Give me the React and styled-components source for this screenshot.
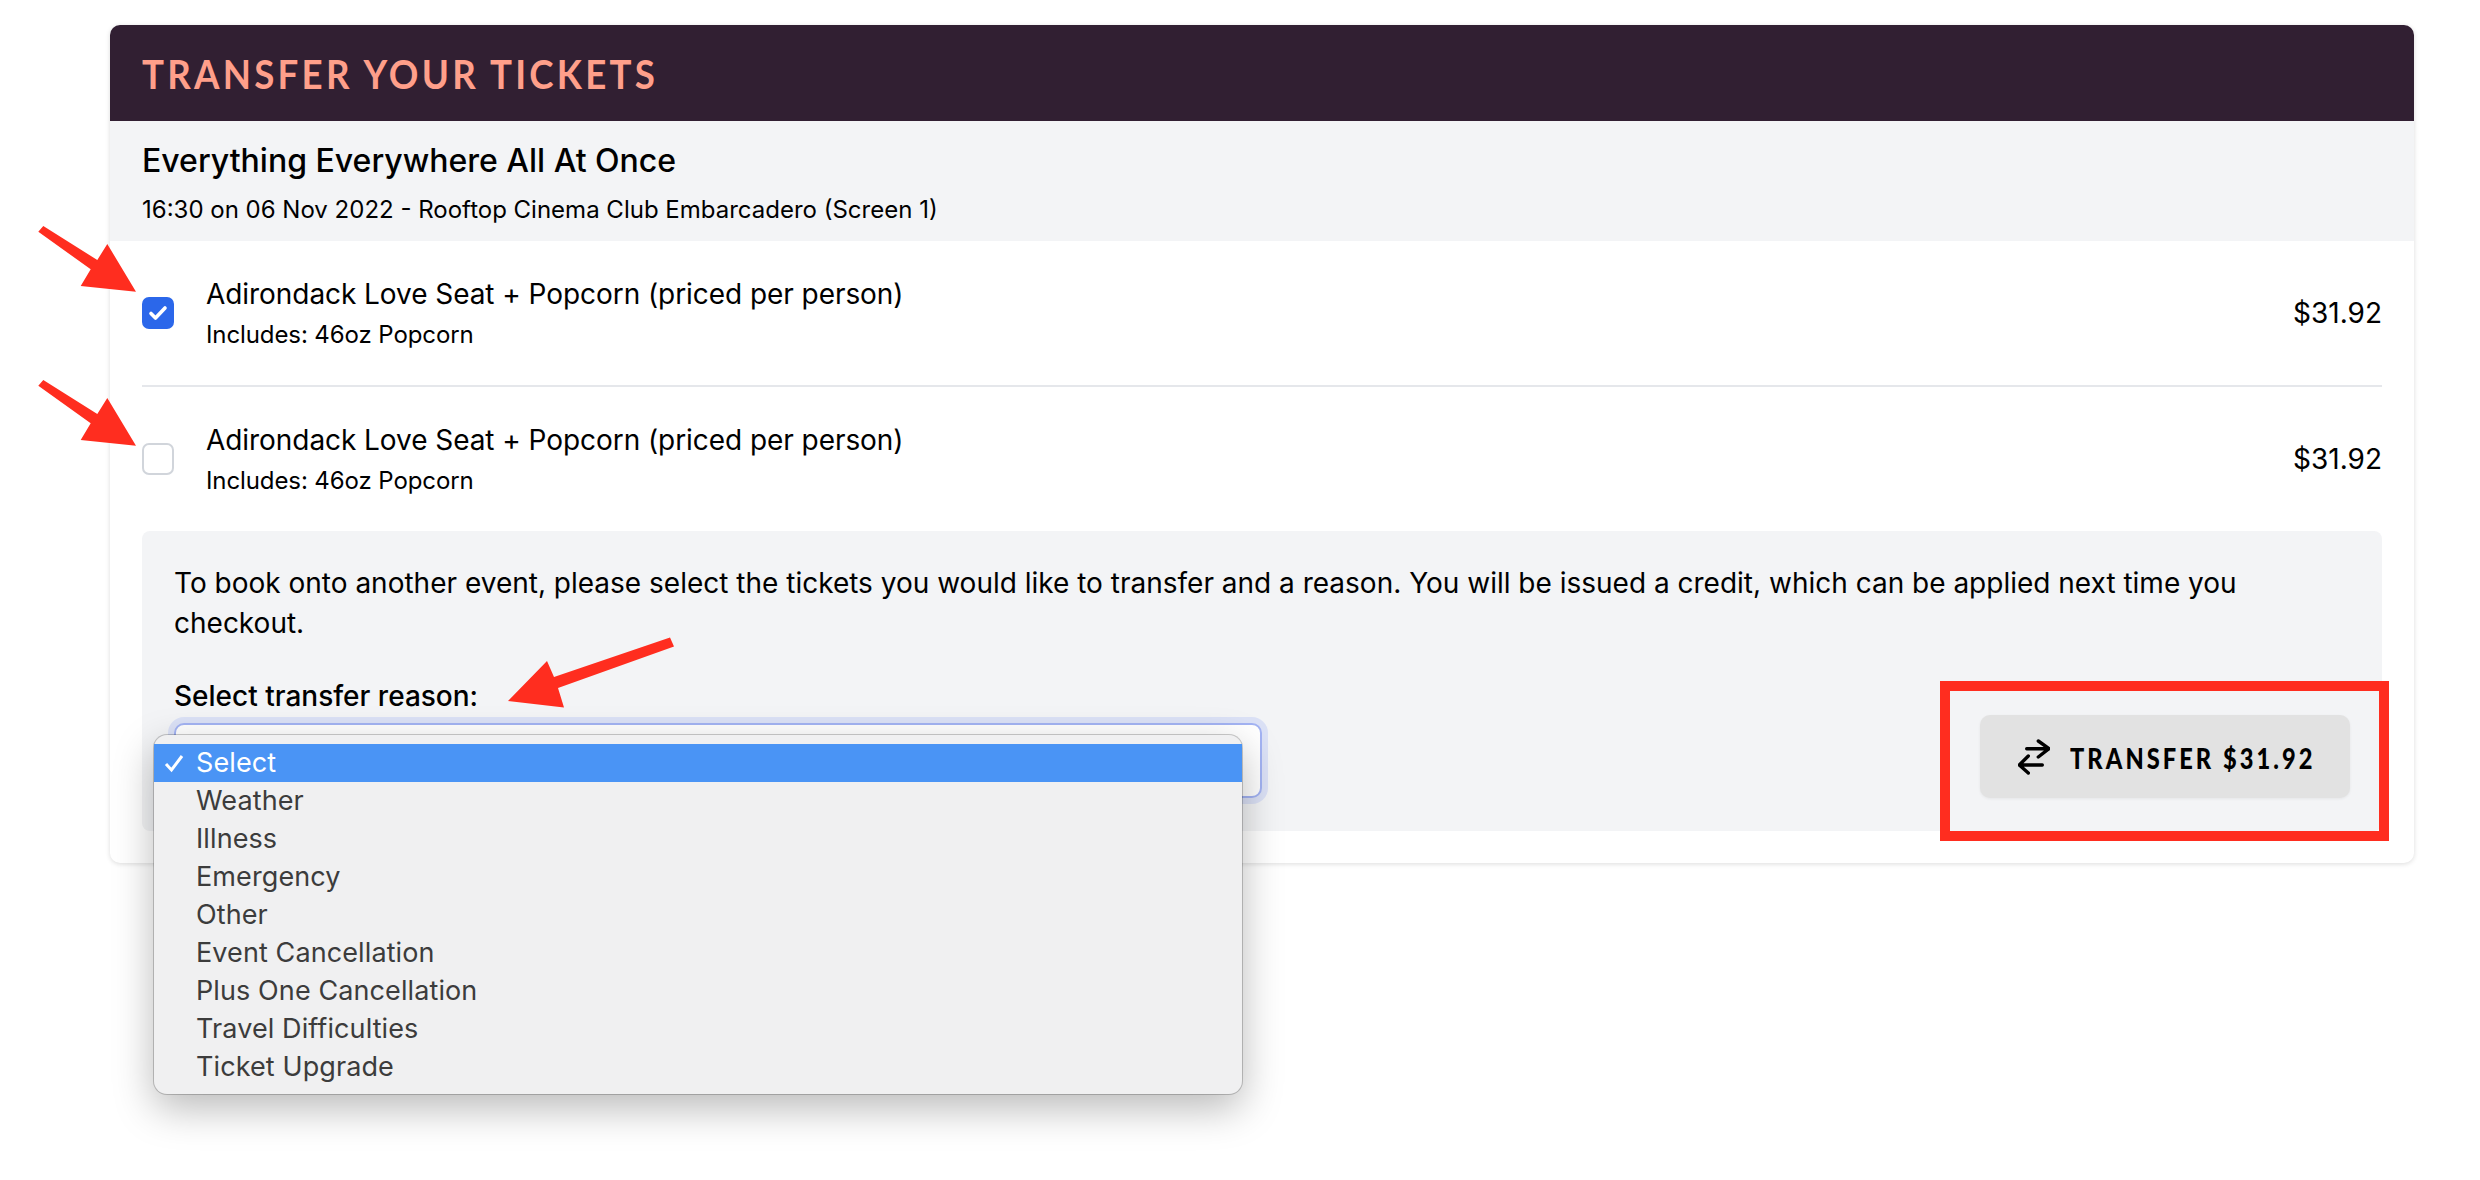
import React from 'react';
import styled, { createGlobalStyle } from 'styled-components';

const GlobalStyle = createGlobalStyle`
  html, body {
    margin: 0;
    background: #fff;
  }
  body {
    font-family: Inter, "Liberation Sans", sans-serif;
    color: #000;
  }
`;

const Page = styled.div`
  position: relative;
  width: 2480px;
  height: 1180px;
  padding: 25px 66px 0 110px;
  box-sizing: border-box;
  overflow: hidden;
`;

const Card = styled.section`
  padding-bottom: 32px;
  background: #fff;
  border-radius: 10px;
  box-shadow: 0 1px 5px rgba(0, 0, 0, 0.14);
`;

const Header = styled.header`
  height: 96px;
  display: flex;
  align-items: center;
  padding: 0 32px;
  background: #311f32;
  border-radius: 10px 10px 0 0;
`;

const HeaderTitle = styled.h1`
  margin: 0;
  font-family: Lato, sans-serif;
  font-size: 41px;
  font-weight: 700;
  letter-spacing: 3.6px;
  color: #ff9f8a;
  white-space: nowrap;
  transform: scaleX(0.895);
  transform-origin: left center;
`;

const EventInfo = styled.div`
  height: 120px;
  box-sizing: border-box;
  padding: 18px 32px 0;
  background: #f3f4f6;
`;

const EventName = styled.h2`
  margin: 0 0 9px;
  font-size: 32px;
  line-height: 44px;
  font-weight: 500;
`;

const EventMeta = styled.div`
  font-size: 24px;
  line-height: 36px;
`;

const TicketList = styled.div`
  padding: 0 32px;
`;

const TicketRow = styled.div`
  height: 144px;
  display: flex;
  align-items: center;
  border-bottom: ${p => (p.$divider ? '2px solid #e5e7eb' : 'none')};
`;

const Checkbox = styled.span`
  width: 32px;
  height: 32px;
  box-sizing: border-box;
  flex: none;
  display: flex;
  align-items: center;
  justify-content: center;
  margin-right: 32px;
  border-radius: 7px;
  background: ${p => (p.$checked ? '#2b67ea' : '#fff')};
  border: ${p => (p.$checked ? 'none' : '2px solid #d1d5db')};
`;

const TicketText = styled.div`
  flex: 1;
`;

const TicketName = styled.div`
  font-size: 28px;
  line-height: 40px;
  letter-spacing: -0.06px;
  margin-bottom: 3px;
`;

const TicketIncludes = styled.div`
  font-size: 24px;
  line-height: 36px;
  letter-spacing: -0.1px;
`;

const Price = styled.div`
  font-size: 28px;
  line-height: 40px;
`;

const TransferPanel = styled.div`
  margin: 0 32px;
  height: 300px;
  box-sizing: border-box;
  padding: 32px 32px 33px;
  background: #f3f4f6;
  border-radius: 8px;
  display: flex;
  flex-direction: column;
  justify-content: space-between;
`;

const PanelText = styled.p`
  margin: 0;
  font-size: 28px;
  line-height: 40px;
`;

const PanelFooter = styled.div`
  display: flex;
  justify-content: space-between;
  align-items: flex-end;
`;

const ReasonField = styled.div`
  width: 1088px;
`;

const ReasonLabel = styled.label`
  display: block;
  margin-bottom: 7px;
  font-size: 28px;
  line-height: 40px;
  font-weight: 500;
`;

const SelectBox = styled.div`
  position: relative;
  height: 75px;
  box-sizing: border-box;
  background: #fff;
  border: 2px solid #a3b3f3;
  border-radius: 10px;
  box-shadow: 0 0 0 6px #dbe1f6;
`;

const Dropdown = styled.ul`
  position: absolute;
  left: -22px;
  top: 10px;
  width: 1088px;
  margin: 0;
  padding: 9px 0 8px;
  box-sizing: border-box;
  list-style: none;
  background: #f0f0f1;
  border-radius: 13px;
  box-shadow: 0 0 0 1px rgba(0, 0, 0, 0.2), 0 14px 40px rgba(0, 0, 0, 0.28);
  font-family: Inter, "Liberation Sans", sans-serif;
  font-size: 27px;
  letter-spacing: 0.1px;
  color: #3c3c3c;
`;

const DropdownItem = styled.li`
  height: 38px;
  line-height: 38px;
  display: flex;
  align-items: center;
  padding-left: 10px;
  background: ${p => (p.$active ? '#4a94f5' : 'transparent')};
  color: ${p => (p.$active ? '#fff' : 'inherit')};
`;

const ItemCheck = styled.span`
  width: 32px;
  flex: none;
  display: flex;
  align-items: center;
`;

const TransferButton = styled.button`
  width: 370px;
  height: 83px;
  display: flex;
  align-items: center;
  padding: 0 0 0 38px;
  border: none;
  border-radius: 10px;
  background: #e2e2e2;
  box-shadow: 0 1px 3px rgba(0, 0, 0, 0.06);
  color: #000;
`;

const TransferIcon = styled.svg`
  flex: none;
`;

const ButtonLabel = styled.span`
  margin-left: 20px;
  padding-top: 2px;
  font-family: Lato, sans-serif;
  font-size: 28px;
  font-weight: 900;
  letter-spacing: 3.6px;
  white-space: nowrap;
  transform: scaleX(0.845);
  transform-origin: left center;
`;

const ArrowMark = styled.svg`
  position: absolute;
  left: ${p => p.$left}px;
  top: ${p => p.$top}px;
`;

const RedFrame = styled.div`
  position: absolute;
  left: 1940px;
  top: 681px;
  width: 449px;
  height: 160px;
  box-sizing: border-box;
  border: 10px solid #ff2d1f;
`;

const reasons = [
  'Select',
  'Weather',
  'Illness',
  'Emergency',
  'Other',
  'Event Cancellation',
  'Plus One Cancellation',
  'Travel Difficulties',
  'Ticket Upgrade',
];

const DownRightArrow = ({ top }) => (
  <ArrowMark $left={38} $top={top} width="100" height="68" viewBox="0 0 100 68">
    <polygon
      fill="#ff2d1f"
      points="5.3,0 59.3,34 69.3,18 98,65.7 42.7,60 52.7,43.3 0.3,5.7"
    />
  </ArrowMark>
);

const Ticket = ({ checked, divider }) => (
  <TicketRow $divider={divider}>
    <Checkbox $checked={checked}>
      {checked && (
        <svg width="32" height="32" viewBox="0 0 32 32">
          <path
            d="M9 16.5 13.5 21 23 11"
            fill="none"
            stroke="#fff"
            strokeWidth="3.6"
            strokeLinecap="round"
            strokeLinejoin="round"
          />
        </svg>
      )}
    </Checkbox>
    <TicketText>
      <TicketName>Adirondack Love Seat + Popcorn (priced per person)</TicketName>
      <TicketIncludes>Includes: 46oz Popcorn</TicketIncludes>
    </TicketText>
    <Price>$31.92</Price>
  </TicketRow>
);

const App = () => {
  return (
    <Page>
      <GlobalStyle />
      <Card>
        <Header>
          <HeaderTitle>TRANSFER YOUR TICKETS</HeaderTitle>
        </Header>
        <EventInfo>
          <EventName>Everything Everywhere All At Once</EventName>
          <EventMeta>16:30 on 06 Nov 2022 - Rooftop Cinema Club Embarcadero (Screen 1)</EventMeta>
        </EventInfo>
        <TicketList>
          <Ticket checked divider />
          <Ticket />
        </TicketList>
        <TransferPanel>
          <PanelText>
            To book onto another event, please select the tickets you would like to transfer and a reason. You will be issued a credit, which can be applied next time you checkout.
          </PanelText>
          <PanelFooter>
            <ReasonField>
              <ReasonLabel>Select transfer reason:</ReasonLabel>
              <SelectBox>
                <Dropdown>
                  {reasons.map((reason, i) => (
                    <DropdownItem key={reason} $active={i === 0}>
                      <ItemCheck>
                        {i === 0 && (
                          <svg width="20" height="20" viewBox="0 0 20 20">
                            <path d="M2 11 7.5 17 18 3" fill="none" stroke="#fff" strokeWidth="3" />
                          </svg>
                        )}
                      </ItemCheck>
                      {reason}
                    </DropdownItem>
                  ))}
                </Dropdown>
              </SelectBox>
            </ReasonField>
            <TransferButton>
              <TransferIcon width="32" height="36" viewBox="0 0 32 36">
                <path
                  d="M8.7 9.7H31M20.3 2 31 9.7 20.3 18M24.3 26H1.3M10.3 17 1.3 26 10.3 34"
                  fill="none"
                  stroke="#000"
                  strokeWidth="3.4"
                  strokeLinecap="round"
                  strokeLinejoin="round"
                />
              </TransferIcon>
              <ButtonLabel>TRANSFER $31.92</ButtonLabel>
            </TransferButton>
          </PanelFooter>
        </TransferPanel>
      </Card>

      <DownRightArrow top={226} />
      <DownRightArrow top={380} />
      <ArrowMark $left={506} $top={636} width="170" height="74" viewBox="0 0 170 74">
        <polygon
          fill="#ff2d1f"
          points="164,1.4 48,41 41,25 2,65 58,71.6 52,52 168,10.5"
        />
      </ArrowMark>
      <RedFrame />
    </Page>
  );
};

export default App;
